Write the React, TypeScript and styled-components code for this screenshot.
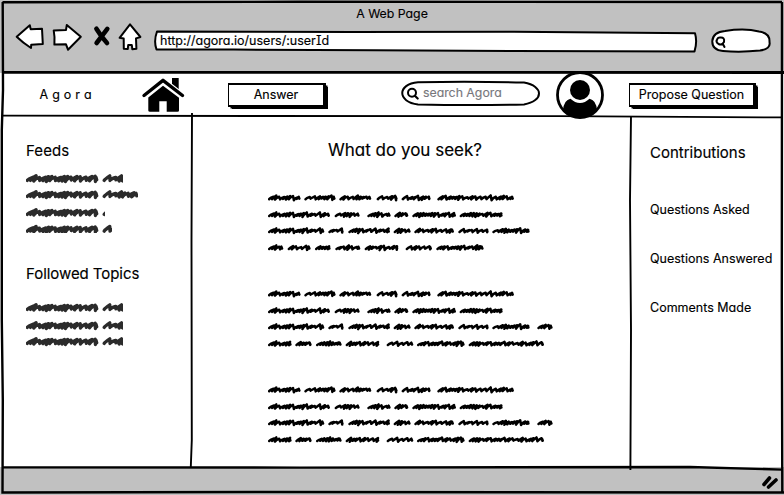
import React from "react";
import styled, { createGlobalStyle } from "styled-components";

const GlobalStyle = createGlobalStyle`
  * { box-sizing: border-box; }
  body { margin: 0; background: #c1c1c1; }
`;

const Page = styled.div`
  position: relative;
  display: flex;
  flex-direction: column;
  width: 784px;
  height: 495px;
  overflow: hidden;
  background: #fff;
  color: #000;
  font-family: Inter, "Liberation Sans", sans-serif;
  font-feature-settings: "cv11" 1, "cv08" 1;
  font-size: 13px;
`;

const Label = styled.span<{ $size?: number; $track?: number; $color?: string }>`
  display: block;
  white-space: nowrap;
  font-size: ${(p) => p.$size ?? 12.5}px;
  line-height: 20px;
  letter-spacing: ${(p) => p.$track ?? 0}px;
  color: ${(p) => p.$color ?? "#000"};
  -webkit-text-stroke: 0.15px currentColor;
`;

const BrowserBar = styled.header`
  flex: none;
  height: 73px;
  background: #c1c1c1;
`;

const TitleRow = styled.div`
  display: flex;
  justify-content: center;
  height: 25px;
  padding-top: 4px;
`;

const ToolRow = styled.div`
  display: flex;
  align-items: flex-start;
  height: 48px;
`;

const NavIcons = styled.svg`
  flex: none;
  width: 153px;
  height: 30px;
  overflow: visible;
`;

const Sketch = styled.svg`
  position: absolute;
  inset: 0;
  width: 100%;
  height: 100%;
  overflow: visible;
  pointer-events: none;
`;

const Field = styled.div<{ $w: number; $h: number }>`
  position: relative;
  flex: none;
  display: flex;
  width: ${(p) => p.$w}px;
  height: ${(p) => p.$h}px;
  & > span { position: relative; }
`;

const Address = styled(Field)`
  margin: 6px 0 0 1px;
  padding: 0 0 0 6px;
`;

const QuickSearch = styled(Field)`
  margin: 4px 0 0 14px;
`;

const AppBar = styled.nav`
  flex: none;
  display: flex;
  height: 43px;
`;

const Brand = styled.div`
  width: 141px;
  padding: 12px 0 0 39.5px;
`;

const HouseIcon = styled.svg`
  flex: none;
  width: 44px;
  height: 36px;
  margin-top: 3px;
`;

const Button = styled.button<{ $w: number }>`
  flex: none;
  width: ${(p) => p.$w}px;
  height: 24px;
  margin-top: 10px;
  padding: 0;
  display: flex;
  justify-content: center;
  border: 1.5px solid #000;
  border-width: 2px 3px 2px 1px;
  background: #fff;
  font: inherit;
  font-feature-settings: inherit;
  box-shadow: 3px 3px 0 -1px #000, 2px 2px 0 -0.5px #000;
`;

const AnswerButton = styled(Button)`
  margin-left: 43px;
`;

const SearchBox = styled(Field)`
  margin: 8px 0 0 75px;
  padding: 2px 0 0 22px;
`;

const Avatar = styled.svg`
  flex: none;
  width: 48px;
  height: 48px;
  margin: -2px 25px 0 16px;
`;

const Body = styled.main`
  flex: 1;
  display: flex;
  min-height: 0;
`;

const LeftPane = styled.aside`
  width: 192px;
  padding: 25px 0 0 26px;
`;

const Topics = styled.section`
  height: 123px;
`;

const CenterPane = styled.section`
  width: 439px;
  padding: 24px 0 0 76px;
`;

const Question = styled.div`
  padding-left: 60px;
  height: 48px;
`;

const Post = styled.svg`
  display: block;
  width: 300px;
  height: 96px;
`;

const FeedLines = styled.svg`
  display: block;
  width: 120px;
  height: 72px;
`;

const RightPane = styled.aside`
  padding: 27px 0 0 19px;
`;

const Stats = styled.div`
  display: grid;
  grid-auto-rows: 49px;
  padding-top: 37px;
`;

const Footer = styled.footer`
  flex: none;
  display: flex;
  justify-content: flex-end;
  height: 28px;
  background: #c1c1c1;
`;

const Grip = styled.svg`
  width: 24px;
  height: 28px;
`;

type Word = [number, number];

const wobble = (n: number) => {
  const v = Math.sin(n * 12.9898) * 43758.5453;
  return v - Math.floor(v);
};

// A handwritten-looking smear: low slanted strokes whose density and height drift along the word.
function scribble([from, to]: Word, y: number, amp: number, step: number) {
  let x = from + 1.2;
  let d = `M${x} ${y + amp * 0.5}`;
  let i = 0;
  const slant = amp * 1.7;
  while (x + slant < to - 1) {
    const swell = 0.72 + 0.28 * Math.sin((x - from) * 0.42 + from);
    const high = y - amp * swell * (0.55 + wobble(i + from * 0.37) * 0.45);
    const low = y + amp * swell * (0.5 + wobble(i + 7 + from) * 0.5);
    const next = x + step * (wobble(i * 3 + from) > 0.62 ? 1.5 : 0.85);
    d += `Q${(x + 1).toFixed(1)} ${y.toFixed(1)} ${(x + slant).toFixed(1)} ${high.toFixed(1)}`;
    d += `L${Math.min(next, to - 1.5).toFixed(1)} ${low.toFixed(1)}`;
    x = next;
    i += 1;
  }
  return d + `L${to - 2} ${y - amp * 0.45}L${to - 1.3} ${y + amp * 0.3}`;
}

const third = (pairs: number[][]): Word[] => pairs.map(([a, b]) => [(a - 24) / 3, (b - 24) / 3]);

const line1 = third([[24, 122], [133, 227], [238, 334], [350, 413], [425, 512], [532, 762]]);
const line2 = third([[24, 210], [224, 299], [322, 392], [403, 445], [457, 588], [599, 728]]);
const line3 = third([[24, 193], [205, 251], [265, 390], [401, 452], [463, 582], [595, 686], [697, 809]]);
const line3Long = [...line3, ...third([[832, 878]])];
const line4 = third([[24, 70], [83, 152], [165, 212], [226, 301], [314, 415], [437, 516], [529, 671]]);
const line4Long = third([[24, 95], [106, 155], [168, 245], [257, 358], [380, 460], [471, 614], [626, 852]]);

const posts = [
  [line1, line2, line3, line4],
  [line1, line2, line3Long, line4Long],
  [line1, line2, line3Long, line4Long],
];

function PostText({ lines }: { lines: Word[][] }) {
  return (
    <Post viewBox="0 0 300 96" fill="none" stroke="#000" strokeWidth="2.5" strokeLinecap="round" strokeLinejoin="round">
      {lines.map((words, i) => (
        <path key={i} d={words.map((w) => scribble(w, [9.9, 26.8, 42.8, 59.8][i], 2.5, 3.4)).join("")} />
      ))}
    </Post>
  );
}

function Feed({ id, rows }: { id: string; rows: [number, number][] }) {
  return (
    <FeedLines viewBox="0 0 120 72" fill="none" stroke="#2b2b2b" strokeWidth="3.3" strokeLinecap="round" strokeLinejoin="round">
      {rows.map(([y, end], i) => (
        <g key={i}>
          <clipPath id={`${id}${i}`}>
            <rect x="0" y={y - 8} width={end} height="16" />
          </clipPath>
          <path clipPath={`url(#${id}${i})`} d={scribble([0, 72], y, 3.3, 3.9) + scribble([77, 112], y, 3.3, 3.9)} />
        </g>
      ))}
    </FeedLines>
  );
}

export default function App() {
  return (
    <Page>
      <GlobalStyle />
      <BrowserBar>
        <TitleRow><Label $size={12.3}>A Web Page</Label></TitleRow>
        <ToolRow>
          <NavIcons viewBox="0 25 153 30" fill="#fff" stroke="#000" strokeWidth="2" strokeLinejoin="round" strokeLinecap="round">
            <path d="M16.7 36.8L29.8 25.2L30.7 29.3L42 28.7L42.8 44L31.2 44.7L31 48Q23 43 16.7 36.8Z" />
            <path d="M53.7 30.4L66 30L66.8 25L80.8 36.8L68 49.7L66 44.3L54.4 44.6Q55 37 53.7 30.4Z" />
            <path d="M96.4 28.7Q101.5 37 107 43M107.3 28.9Q102 36 96.6 43" strokeWidth="4.6" />
            <path d="M130 24.4L140.4 37L136 38.4L136.4 48.7L132.3 49.2L131.8 45L128.2 45L127.8 49L123.8 48.7L123.7 38.5L119.6 37.8Z" />
          </NavIcons>
          <Address $w={543} $h={22}>
            <Sketch viewBox="0 0 543 22" fill="#fff" stroke="#000" strokeWidth="2" strokeLinejoin="round">
              <path d="M3 0.5L200 1L360 .8L541 2.3Q543.5 11 540.5 20.4L360 20L220 19.3L80 18.6L2.5 18.5Q-.5 10 3 .5Z" />
            </Sketch>
            <Label>http://agora.io/users/:userId</Label>
          </Address>
          <QuickSearch $w={60} $h={24}>
            <Sketch viewBox="0 0 60 24" stroke="#000" strokeWidth="2" strokeLinecap="round">
              <path fill="#fff" d="M14 2Q34 -1 48 2.5Q59 4 58.5 13Q60 20 49 21.5Q30 23.5 12 22Q1 21 1.3 12Q2 3 14 2Z" />
              <path fill="none" d="M9 8.6Q14 8 13 13Q11 16.5 7.5 15Q4.5 13 6 10.5Q7 8.5 9 8.6M12 15.3L13.5 18" />
            </Sketch>
          </QuickSearch>
        </ToolRow>
      </BrowserBar>

      <AppBar>
        <Brand><Label $track={0.25}>A g o r a</Label></Brand>
        <HouseIcon viewBox="141 76 44 36">
          <path d="M172 78H178.7V92L172 87Z" />
          <path d="M148.3 97.5L163 85.8L179 97.8V110.5Q179 111.8 177.5 111.8H166.7V101.3H159.3V111.8H150Q148.3 111.8 148.3 110.5Z" />
          <path d="M144 95.5L163 80.3L182.5 95.5" fill="none" stroke="#fff" strokeWidth="5.6" />
          <path d="M144 95.5L163 80.3L182.5 95.5" fill="none" stroke="#000" strokeWidth="3.4" strokeLinecap="round" strokeLinejoin="round" />
        </HouseIcon>
        <AnswerButton $w={98}><Label>Answer</Label></AnswerButton>
        <SearchBox $w={139} $h={25}>
          <Sketch viewBox="0 0 139 25" fill="#fff" stroke="#000" strokeLinecap="round">
            <path strokeWidth="2" d="M17 1.2Q70 .2 123 1.5C143 5 143 20 123 23.4Q70 24.5 17 23.4C-4 21 -4 3 17 1.2Z" />
            <circle cx="11" cy="11.8" r="4" strokeWidth="2" />
            <path d="M13.8 14.8L16.7 17.5" strokeWidth="2.2" />
          </Sketch>
          <Label $size={12.3} $color="#77777c">search Agora</Label>
        </SearchBox>
        <Avatar viewBox="0 0 48 48">
          <clipPath id="portrait"><circle cx="24" cy="24" r="23" /></clipPath>
          <circle cx="24" cy="24" r="22.5" fill="#fff" stroke="#000" strokeWidth="2.8" />
          <path clipPath="url(#portrait)" d="M7 39Q8 29 14.5 27.8Q19 32 24 32Q29 32 33.5 27.8Q40 29 41 39L38 48H10Z" />
          <circle cx="24" cy="19" r="10" />
        </Avatar>
        <Button $w={127}><Label>Propose Question</Label></Button>
      </AppBar>

      <Body>
        <LeftPane>
          <Topics>
            <Label $size={15} $track={0.1}>Feeds</Label>
            <Feed id="feed" rows={[[17.8, 97], [33.8, 112], [51.8, 79], [68.5, 86]]} />
          </Topics>
          <Topics>
            <Label $size={15} $track={-0.06}>Followed Topics</Label>
            <Feed id="topic" rows={[[23.8, 97], [41.8, 97], [57.8, 97]]} />
          </Topics>
        </LeftPane>
        <CenterPane>
          <Question><Label $size={17}>What do you seek?</Label></Question>
          {posts.map((lines, i) => <PostText key={i} lines={lines} />)}
        </CenterPane>
        <RightPane>
          <Label $size={15}>Contributions</Label>
          <Stats>
            <Label>Questions Asked</Label>
            <Label>Questions Answered</Label>
            <Label>Comments Made</Label>
          </Stats>
        </RightPane>
      </Body>

      <Footer>
        <Grip viewBox="760 467 24 28" stroke="#000" strokeWidth="3.6" strokeLinecap="round">
          <path d="M764 484.5L769.5 478M768.5 487L776 480" />
        </Grip>
      </Footer>

      <Sketch viewBox="0 0 784 495" fill="none" stroke="#000" strokeWidth="2.4">
        <path d="M2.5 2.3L300 1.8L782 2M2.7 2L3 90L1.8 130L1.8 320L2.8 400L2.5 492.5L260 492L784 492.5M782 2L781.8 300L782.3 493" />
        <path d="M2 72.3L784 72.5" strokeWidth="2.8" />
        <path d="M2 115.6L260 116L560 116.2L782 117.4" strokeWidth="1.8" />
        <path d="M192 113L191.5 240L191.8 440L190.8 467M631 116L630 200L631 330L630.4 470" strokeWidth="1.9" />
        <path d="M2 467.4L300 467.6L690 467L782 469.6" />
      </Sketch>
    </Page>
  );
}
